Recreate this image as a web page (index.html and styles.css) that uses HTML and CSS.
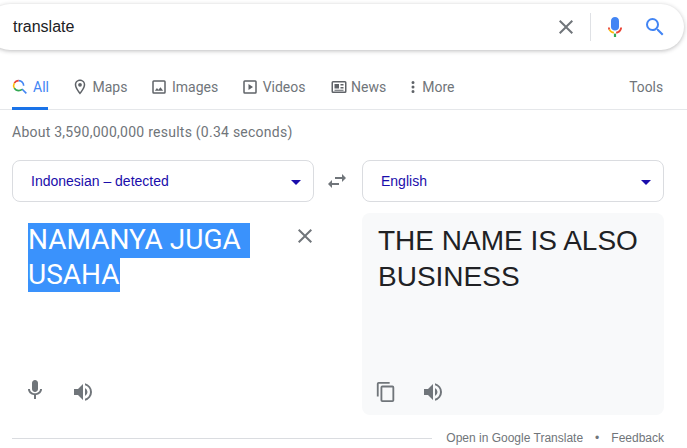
FILE: index.html
```html
<!DOCTYPE html>
<html lang="en">
	<head>
		<meta charset="UTF-8" />
		<title>translate - Google Search</title>
		<link rel="stylesheet" href="styles.css">
	</head>

	<body>
		<div class="wrapper">
			<header class="search-bar">
				<span class="search-query">translate</span>
				<svg class="search-clear" width="24" height="24" viewBox="0 0 24 24"><path fill="#70757a" d="M19 6.41 17.59 5 12 10.59 6.41 5 5 6.41 10.59 12 5 17.59 6.41 19 12 13.41 17.59 19 19 17.59 13.41 12z"/></svg>
				<span class="search-divider"></span>
				<svg class="search-mic" width="24" height="24" viewBox="0 0 24 24">
					<path fill="#4285f4" d="M12 15.500c2.200 0 4-1.600 4-3.600V5.800C16 3.700 14.200 2 12 2S8 3.700 8 5.800v6.100c0 2 1.800 3.600 4 3.600z"/>
					<path fill="#ea4335" d="M5 12.500c0 .9.200 1.800.6 2.600l1.600-.9c-.3-.5-.4-1.100-.4-1.700H5z"/>
					<path fill="#fbbc05" d="M5.600 15.100c1.100 2 3 3.300 5.300 3.500v-1.900c-1.600-.2-3-1.100-3.700-2.500l-1.600.9z"/>
					<path fill="#34a853" d="M10.900 18.600V22h2.200v-3.400h-2.200z"/>
					<path fill="#ea4335" d="M19 12.500h-1.800c0 2.200-1.800 4-4.100 4.200v1.900c3.300-.3 5.900-2.900 5.900-6.100z"/>
				</svg>
				<svg class="search-go" width="24" height="24" viewBox="0 0 24 24"><path fill="#4285f4" d="M15.500 14h-.79l-.28-.27A6.470 6.470 0 0 0 16 9.500 6.500 6.500 0 1 0 9.500 16c1.610 0 3.090-.59 4.230-1.570l.27.28v.79l5 4.990L20.490 19l-4.990-5zm-6 0C7.010 14 5 11.990 5 9.500S7.010 5 9.500 5 14 7.010 14 9.500 11.990 14 9.500 14z"/></svg>
			</header>

			<nav class="tabs">
				<a class="tab tab_active">
					<svg width="16" height="16" viewBox="0 0 24 24" fill="none">
						<path stroke="#4285f4" stroke-width="2.400" d="M15 15l6.500 6.500"/>
						<path stroke="#4285f4" stroke-width="2.400" d="M10 2.500a7.500 7.500 0 0 1 7.500 7.500"/>
						<path stroke="#ea4335" stroke-width="2.400" d="M10 2.500A7.500 7.500 0 0 0 3.500 6.300"/>
						<path stroke="#fbbc05" stroke-width="2.400" d="M3.500 6.300a7.500 7.500 0 0 0 0 7.400"/>
						<path stroke="#34a853" stroke-width="2.400" d="M3.500 13.700A7.500 7.500 0 0 0 10 17.500a7.500 7.500 0 0 0 5-1.900"/>
					</svg>
					All
				</a>
				<a class="tab">
					<svg width="18" height="18" viewBox="0 0 24 24"><path fill="#5f6368" d="M12 2C8.130 2 5 5.130 5 9c0 5.250 7 13 7 13s7-7.750 7-13c0-3.870-3.130-7-7-7zm0 17c-2.100-2.700-5-6.900-5-10a5 5 0 0 1 10 0c0 3.100-2.900 7.300-5 10z"/><circle fill="#5f6368" cx="12" cy="9" r="2.500"/></svg>
					Maps
				</a>
				<a class="tab">
					<svg width="18" height="18" viewBox="0 0 24 24"><path fill="#5f6368" d="M19 3H5a2 2 0 0 0-2 2v14a2 2 0 0 0 2 2h14a2 2 0 0 0 2-2V5a2 2 0 0 0-2-2zm0 16H5V5h14v14zM13.960 12.290l-2.750 3.540-1.960-2.360L6.500 17h11l-3.540-4.710z"/></svg>
					Images
				</a>
				<a class="tab">
					<svg width="18" height="18" viewBox="0 0 24 24"><path fill="#5f6368" d="M19 3H5a2 2 0 0 0-2 2v14a2 2 0 0 0 2 2h14a2 2 0 0 0 2-2V5a2 2 0 0 0-2-2zm0 16H5V5h14v14zM10 8v8l6-4z"/></svg>
					Videos
				</a>
				<a class="tab tab_news">
					<svg width="18" height="18" viewBox="0 0 24 24"><path fill="#5f6368" d="M20 4H4a2 2 0 0 0-2 2v12a2 2 0 0 0 2 2h16a2 2 0 0 0 2-2V6a2 2 0 0 0-2-2zm0 14H4V6h16v12zM6 8h6v6H6zM14 8h4v2h-4zM14 12h4v2h-4zM6 15.500h12v1.500H6z"/></svg>
					News
				</a>
				<a class="tab tab_more">
					<svg width="18" height="18" viewBox="0 0 24 24"><path fill="#5f6368" d="M12 8a2 2 0 1 0 0-4 2 2 0 0 0 0 4zm0 2a2 2 0 1 0 0 4 2 2 0 0 0 0-4zm0 6a2 2 0 1 0 0 4 2 2 0 0 0 0-4z"/></svg>
					More
				</a>
				<a class="tab tab_tools">Tools</a>
			</nav>

			<div class="result-stats">About 3,590,000,000 results (0.34 seconds)</div>

			<section class="translate">
				<div class="translate-langs">
					<div class="lang-select">
						<span>Indonesian – detected</span>
						<span class="lang-caret"></span>
					</div>
					<svg class="lang-swap" width="24" height="24" viewBox="0 0 24 24"><path fill="#70757a" d="M6.990 11 3 15l3.990 4v-3H14v-2H6.990v-3zM21 9l-3.990-4v3H10v2h7.010v3L21 9z"/></svg>
					<div class="lang-select">
						<span>English</span>
						<span class="lang-caret"></span>
					</div>
				</div>

				<div class="translate-panels">
					<div class="panel panel_source">
						<div class="panel-top">
							<div class="source-text">
								<span class="selected-line selected-line_first">NAMANYA JUGA&nbsp;</span>
								<span class="selected-line">USAHA</span>
							</div>
							<svg class="source-clear" width="24" height="24" viewBox="0 0 24 24"><path fill="#70757a" d="M19 6.410 17.590 5 12 10.590 6.410 5 5 6.410 10.590 12 5 17.590 6.410 19 12 13.410 17.590 19 19 17.590 13.410 12z"/></svg>
						</div>
						<div class="panel-actions">
							<svg class="action-mic" width="24" height="24" viewBox="0 0 24 24"><path fill="#70757a" d="M12 14c1.660 0 3-1.340 3-3V5c0-1.660-1.340-3-3-3S9 3.340 9 5v6c0 1.660 1.340 3 3 3z"/><path fill="#70757a" d="M17 11c0 2.500-2.200 4.300-5 4.300S7 13.500 7 11H5c0 3.300 2.700 5.700 6 6.100V21h2v-3.900c3.300-.4 6-2.800 6-6.100h-2z"/></svg>
							<svg width="24" height="24" viewBox="0 0 24 24"><path fill="#70757a" d="M3 9v6h4l5 5V4L7 9H3zm13.500 3A4.500 4.500 0 0 0 14 7.970v8.050A4.470 4.470 0 0 0 16.500 12zM14 3.230v2.060A7 7 0 0 1 19 12a7 7 0 0 1-5 6.710v2.060A9 9 0 0 0 21 12a9 9 0 0 0-7-8.770z"/></svg>
						</div>
					</div>
					<div class="panel panel_target">
						<div class="target-text">THE NAME IS ALSO BUSINESS</div>
						<div class="panel-actions">
							<svg class="action-copy" width="22" height="22" viewBox="0 0 24 24"><path fill="#70757a" d="M16 1H4a2 2 0 0 0-2 2v14h2V3h12V1zm3 4H8a2 2 0 0 0-2 2v14a2 2 0 0 0 2 2h11a2 2 0 0 0 2-2V7a2 2 0 0 0-2-2zm0 16H8V7h11v14z"/></svg>
							<svg width="24" height="24" viewBox="0 0 24 24"><path fill="#70757a" d="M3 9v6h4l5 5V4L7 9H3zm13.500 3A4.500 4.500 0 0 0 14 7.970v8.050A4.470 4.470 0 0 0 16.500 12zM14 3.230v2.060A7 7 0 0 1 19 12a7 7 0 0 1-5 6.710v2.060A9 9 0 0 0 21 12a9 9 0 0 0-7-8.770z"/></svg>
						</div>
					</div>
				</div>

				<footer class="translate-footer">
					<span class="footer-line"></span>
					<a>Open in Google Translate</a>
					<span class="footer-dot">•</span>
					<a>Feedback</a>
				</footer>
			</section>
		</div>
	</body>
</html>
```

FILE: styles.css
```css
html {
	box-sizing: border-box;
}

*,
*::after,
*::before {
	box-sizing: inherit;
}

body {
	margin: 0;
	background-color: white;
	font-family: "Roboto", "Liberation Sans", sans-serif;
	color: #70757a;
}

svg {
	flex-shrink: 0;
}

.wrapper {
	width: 687px;
	height: 448px;
	overflow: hidden;
}

.search-bar {
	display: flex;
	align-items: center;
	height: 46px;
	width: 697px;
	margin: 4px 0 0 -13px;
	padding: 0 17px 0 26px;
	background-color: white;
	border-radius: 24px;
	box-shadow: 0 1px 4px rgb(32 33 36 / 30%);
}

.search-query {
	flex-grow: 1;
	font-family: "Liberation Sans", sans-serif;
	font-size: 16px;
	color: #202124;
}

.search-clear {
	margin-right: 12px;
}

.search-divider {
	width: 1px;
	height: 28px;
	margin-right: 12px;
	background-color: #dfe1e5;
}

.search-mic {
	margin-right: 16px;
}

.tabs {
	display: flex;
	align-items: flex-start;
	height: 33px;
	margin-top: 27px;
	padding: 0 24px 0 12px;
	border-bottom: 1px solid #e5e7ea;
	font-size: 14px;
	line-height: 20px;
}

.tab {
	display: flex;
	align-items: center;
	gap: 3.5px;
	height: 33px;
	padding-bottom: 13px;
	margin-right: 23px;
}

.tab_active {
	width: 36px;
	gap: 5px;
	color: #4285f4;
	border-bottom: 3px solid #1a73e8;
	padding-bottom: 10px;
	white-space: nowrap;
}

.tab_news {
	margin-left: 1px;
	margin-right: 18px;
}

.tab_more {
	gap: 0;
}

.tab_tools {
	margin: 0 0 0 auto;
	font-size: 13.8px;
}

.result-stats {
	margin: 14px 0 0 12px;
	font-size: 14px;
	line-height: 16px;
	letter-spacing: 0.25px;
}

.translate {
	margin: 20px 23px 0 12px;
}

.translate-langs {
	display: flex;
	align-items: center;
	justify-content: space-between;
}

.lang-select {
	display: flex;
	align-items: center;
	justify-content: space-between;
	width: 302px;
	height: 42px;
	padding: 0 12px 0 18px;
	border: 1px solid #dadce0;
	border-radius: 8px;
	font-family: "Liberation Sans", sans-serif;
	font-size: 14px;
	color: #1a0dab;
}

.lang-caret {
	width: 0;
	height: 0;
	margin-top: 2px;
	border-top: 5px solid #1a0dab;
	border-left: 5px solid transparent;
	border-right: 5px solid transparent;
}

.lang-swap {
	margin-right: 2px;
}

.translate-panels {
	display: flex;
	justify-content: space-between;
	margin-top: 11px;
}

.panel {
	display: flex;
	flex-direction: column;
	justify-content: space-between;
	width: 302px;
	height: 202px;
}

.panel-top {
	display: flex;
	justify-content: space-between;
	padding: 10px 0 0 16px;
}

.source-text {
	display: flex;
	flex-direction: column;
	align-items: flex-start;
	font-size: 28px;
	line-height: 34.5px;
	color: white;
}

.selected-line {
	background-color: #3a92fc;
	white-space: pre;
}

.selected-line_first {
	padding-right: 2px;
	padding-bottom: 1px;
	line-height: 33.5px;
}

.source-clear {
	margin: 1px -3px 0 0;
}

.panel_target {
	padding-top: 10px;
	background-color: #f8f9fa;
	border-radius: 8px;
}

.target-text {
	padding: 0 16px;
	font-family: "Liberation Sans", sans-serif;
	font-size: 28px;
	line-height: 36px;
	color: #202124;
}

.panel-actions {
	display: flex;
	align-items: flex-start;
	gap: 24px;
	padding: 0 0 11px 11px;
}

.action-mic {
	margin-top: -2px;
}

.action-copy {
	margin: 1px 0 0 2px;
}

.translate-footer {
	display: flex;
	align-items: center;
	height: 16px;
	margin-top: 15px;
	font-family: "Liberation Sans", sans-serif;
	font-size: 12px;
	line-height: 16px;
}

.footer-line {
	flex-grow: 1;
	height: 1px;
	margin-right: 14px;
	background-color: #dadce0;
}

.footer-dot {
	margin: 0 12px;
	font-size: 12px;
}
```
